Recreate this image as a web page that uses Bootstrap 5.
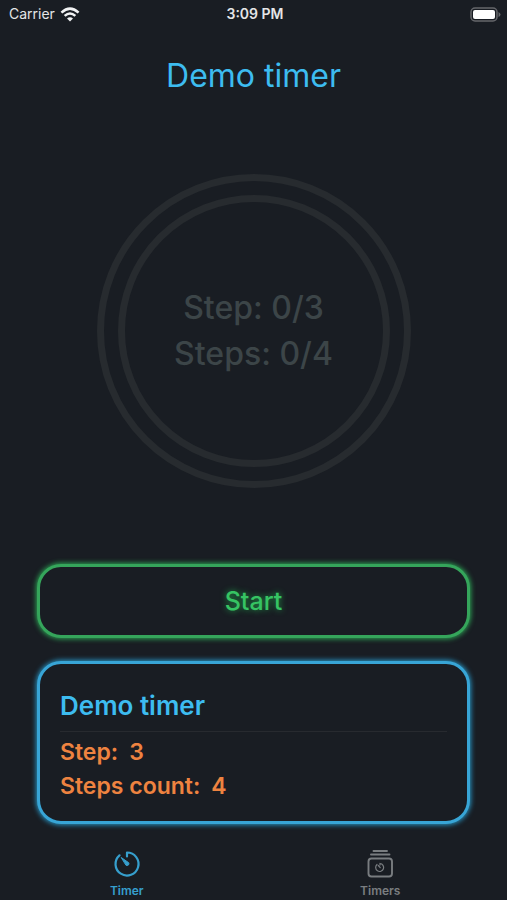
<!DOCTYPE html>
<html lang="en">
<head>
<meta charset="utf-8">
<meta name="viewport" content="width=device-width, initial-scale=1">
<title>Demo timer</title>
<link href="https://cdn.jsdelivr.net/npm/bootstrap@5.3.0/dist/css/bootstrap.min.css" rel="stylesheet">
<style>
  :root { --bg: #191d23; --blue: #3dbcf0; --green: #36c463; --orange: #ee8340; --ring: #272b2f; --dim: #3c4548; }
  body { background: var(--bg); color: #e4e5e7; font-family: Inter, "Liberation Sans", sans-serif; }
  .status-bar { height: 28px; padding: 0 6px 0 9px; font-size: 14px; line-height: 20px; }
  .page-title { margin: 28px 0 0; font-size: 32px; line-height: 40px; font-weight: 400; color: var(--blue); }
  .screen { padding: 0 37px; }
  .dial { width: 314px; aspect-ratio: 1; margin-top: 78px; padding: 14px; border: 7px solid var(--ring); }
  .dial-inner { border: 7px solid var(--ring); font-size: 32px; line-height: 46px; font-weight: 500; color: var(--dim); }
  .glow-box { background: var(--bg); border: 3px solid; border-radius: 24px; }
  .btn-start, .btn-start:hover { margin-top: 76px; height: 74px; border-color: #35a55b; box-shadow: 0 0 5px 1px #2ca354; color: var(--green); font-size: 25px; font-weight: 500; line-height: 32px; text-shadow: 0 0 6px #1f9c48; }
  .info-card { margin-top: 23px; padding: 24px 20px 18px; border-color: #38a5d6; box-shadow: 0 0 5px 1px #2795c4; font-size: 23px; line-height: 34px; color: var(--orange); }
  .info-title { margin: 0; padding-bottom: 7px; border-bottom: 1px solid #272a2f; font-size: 26px; line-height: 36px; font-weight: 600; color: var(--blue); }
  .info-list { margin: 3px 0 0; font-weight: 600; }
  .info-row { gap: 11px; }
  .info-list dt { font-weight: 600; }
  .tabs { font-size: 12px; line-height: 18px; font-weight: 600; }
  .tabs a { color: #797d80; }
  .tabs a.active { color: #369fcd; }
</style>
</head>
<body>
<div class="d-flex flex-column min-vh-100">
  <header class="status-bar row g-0 align-items-center">
    <div class="col d-flex align-items-center gap-1">
      <span>Carrier</span>
      <svg width="22" height="15" viewBox="0 0 18 14" fill="none" stroke="#f1f2f3" stroke-width="2.4" aria-hidden="true">
        <path d="M1 5.200Q9-2.200 17 5.200M4 8.300Q9 3.800 14 8.300"/>
        <path d="M9 13.600 6.200 10.700Q9 8.400 11.800 10.700Z" fill="#f1f2f3" stroke="none"/>
      </svg>
    </div>
    <div class="col-auto fw-semibold">3:09 PM</div>
    <div class="col d-flex justify-content-end">
      <svg width="31" height="15" viewBox="0 0 31 15" aria-label="Battery full" role="img">
        <rect x="1" y="1" width="26" height="13" rx="4" fill="none" stroke="#65676b" stroke-width="1.5"/>
        <rect x="3" y="3" width="22" height="9" rx="2" fill="#fff"/>
        <path d="M28.500 5q2 1 2 2.500t-2 2.500z" fill="#65676b"/>
      </svg>
    </div>
  </header>

  <main class="screen flex-grow-1 d-flex flex-column">
    <h1 class="page-title text-center">Demo timer</h1>
    <div class="dial rounded-circle mx-auto mw-100 d-flex">
      <div class="dial-inner rounded-circle w-100 d-flex flex-column align-items-center justify-content-center">
        <div>Step: 0/3</div>
        <div>Steps: 0/4</div>
      </div>
    </div>
    <button type="button" class="btn btn-start glow-box w-100">Start</button>
    <section class="info-card glow-box">
      <h2 class="info-title">Demo timer</h2>
      <dl class="info-list">
        <div class="info-row d-flex"><dt>Step:</dt><dd class="m-0">3</dd></div>
        <div class="info-row d-flex"><dt>Steps count:</dt><dd class="m-0">4</dd></div>
      </dl>
    </section>
  </main>

  <nav class="tabs row g-0 text-center" aria-label="Main">
    <a href="#timer" class="col active text-decoration-none d-flex flex-column align-items-center" aria-current="page">
      <svg width="34" height="34" viewBox="0 0 34 34" fill="none" stroke="currentColor" stroke-width="2.200" stroke-linecap="round" stroke-linejoin="round" aria-hidden="true">
        <path d="M17 8.500V4.500A11.500 11.500 0 1 1 9.500 7.300"/>
        <path d="M11.500 9.700 18.700 14.700A1.900 1.900 0 0 1 16.300 17.400Z" fill="currentColor" stroke-width="1"/>
      </svg>
      <span>Timer</span>
    </a>
    <a href="#timers" class="col text-decoration-none d-flex flex-column align-items-center">
      <svg width="34" height="34" viewBox="0 0 34 34" fill="none" stroke="currentColor" stroke-width="1.900" stroke-linecap="round" aria-hidden="true">
        <rect x="5.500" y="10.500" width="23.500" height="18" rx="3"/>
        <path d="M8 6.500H26.500M10.500 3H24"/>
        <path d="M17 17V15.500A4 4 0 1 1 14 16.500M15.300 17.500 17.200 19.700" stroke-width="1.200"/>
      </svg>
      <span>Timers</span>
    </a>
  </nav>
</div>
<script src="https://cdn.jsdelivr.net/npm/bootstrap@5.3.0/dist/js/bootstrap.bundle.min.js"></script>
</body>
</html>
